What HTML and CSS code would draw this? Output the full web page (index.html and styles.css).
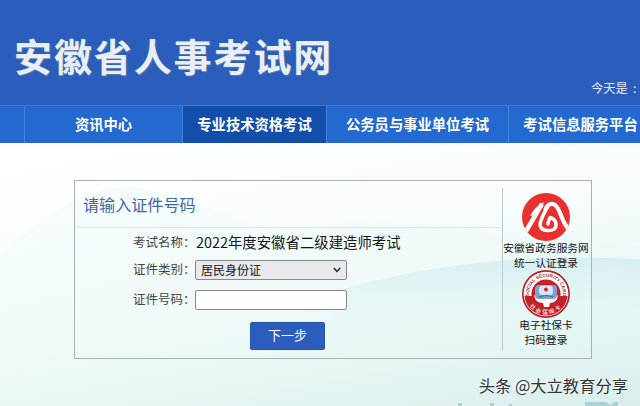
FILE: index.html
```html
<!DOCTYPE html>
<html lang="zh-CN">
<head>
  <meta charset="UTF-8" />
  <meta name="viewport" content="width=device-width, initial-scale=1.0" />
  <title>安徽省人事考试网</title>
  <link rel="stylesheet" href="styles.css">
</head>
<body>
  <header class="header">
    <h1 class="logo">安徽省人事考试网</h1>
    <span class="today">今天是<span class="colon">:</span></span>
  </header>

  <nav class="nav">
    <a class="nav-item" href="#">资讯中心</a>
    <a class="nav-item active" href="#">专业技术资格考试</a>
    <a class="nav-item" href="#">公务员与事业单位考试</a>
    <a class="nav-item" href="#">考试信息服务平台</a>
  </nav>

  <main class="main">
    <svg class="hills" viewBox="0 0 640 264" preserveAspectRatio="none">
      <defs>
        <linearGradient id="hill1" x1="0" y1="0" x2="0" y2="1">
          <stop offset="0" stop-color="#cdeaee" stop-opacity="0.7"/>
          <stop offset="0.5" stop-color="#dcf4f3" stop-opacity="0.25"/>
          <stop offset="1" stop-color="#dcf4f3" stop-opacity="0"/>
        </linearGradient>
        <linearGradient id="hill2" x1="0" y1="0" x2="0" y2="1">
          <stop offset="0" stop-color="#e6f7f8" stop-opacity="0.35"/>
          <stop offset="1" stop-color="#e6f7f8" stop-opacity="0"/>
        </linearGradient>
      </defs>
      <path d="M0 115Q60 50 130 42Q200 60 270 90Q370 70 500 92Q570 92 640 104V264H0Z" fill="url(#hill2)"/>
      <path d="M330 150Q440 118 560 115Q610 115 640 117V220H330Z" fill="url(#hill1)"/>
      <path d="M458 261h4v3h-4zM490 261h4v3h-4zM509 262h3v2h-3zM585 260h21l5 4h-26zM614 260h4v4h-8z" fill="#a9d3d2"/>
    </svg>

    <section class="panel">
      <form class="login-form">
        <h2 class="form-title">请输入证件号码</h2>
        <div class="form-row">
          <span class="label">考试名称：</span>
          <span class="exam-name">2022年度安徽省二级建造师考试</span>
        </div>
        <div class="form-row row-type">
          <label class="label" for="cardType">证件类别：</label>
          <div class="select" id="cardType">
            <span>居民身份证</span>
            <svg width="8" height="6" viewBox="0 0 8 6"><path d="M0.8 1L4 4.4L7.2 1" fill="none" stroke="#222" stroke-width="1.5"/></svg>
          </div>
        </div>
        <div class="form-row row-number">
          <label class="label" for="cardNo">证件号码：</label>
          <input type="text" id="cardNo" class="input" />
        </div>
        <button type="button" class="btn-next">下一步</button>
      </form>

      <aside class="other-login">
        <a class="login-way" href="#">
          <svg class="way-icon" viewBox="0 0 48 48">
            <defs>
              <clipPath id="disc"><circle cx="24" cy="24" r="24"/></clipPath>
            </defs>
            <circle cx="24" cy="24" r="24" fill="#e9302e"/>
            <g clip-path="url(#disc)">
              <path d="M1 43L13 23Q17 15 20 11" fill="none" stroke="#fff" stroke-width="4.6"/>
              <path d="M8 23Q13 13 22 9L20 15Q16 16 12 22Z" fill="#fff"/>
              <path d="M23 17Q26 10 31 11Q35 12 38 20Q41 29 48 39" fill="none" stroke="#fff" stroke-width="4"/>
              <path d="M26 13Q19 25 18 31Q18 37 25 37.500Q34 38 34 32Q34 26 28 24.500Q26 29 26 31" fill="none" stroke="#fff" stroke-width="3.500" stroke-linecap="round" stroke-linejoin="round"/>
            </g>
          </svg>
          <span>安徽省政务服务网</span>
          <span>统一认证登录</span>
        </a>
        <a class="login-way" href="#">
          <svg class="way-icon" viewBox="0 0 48 48">
            <defs>
              <path id="arcTop" d="M7.500 28A17 17 0 1 1 40.500 28"/>
              <path id="arcBottom" d="M3.500 26.500A20.700 20.700 0 0 0 44.500 26.500"/>
            </defs>
            <circle cx="24" cy="24" r="24" fill="#b9232a"/>
            <circle cx="24" cy="24" r="22.300" fill="#fff"/>
            <path d="M2.500 26H45.500A21.600 21.600 0 0 1 2.500 26Z" fill="#c3222a"/>
            <circle cx="24" cy="24" r="14.600" fill="#c3222a"/>
            <path d="M12 25Q13 33 21 33L22 37H27L28 33Q35 33 36 25L30 29H18Z" fill="#fff"/>
            <rect x="13" y="15" width="22" height="14" rx="4" fill="#7fa3d0"/>
            <rect x="17" y="15.500" width="14" height="10" rx="4" fill="#d5e5f5"/>
            <circle cx="24" cy="19.500" r="1.900" fill="#d5232b"/>
            <path d="M17 27Q24 24 31 27" stroke="#466eb1" stroke-width="1.500" fill="none"/>
            <text class="seal-en"><textPath href="#arcTop" startOffset="50%">SOCIAL SECURITY CARD</textPath></text>
            <text class="seal-cn"><textPath href="#arcBottom" startOffset="50%">社会保障卡</textPath></text>
          </svg>
          <span>电子社保卡</span>
          <span>扫码登录</span>
        </a>
      </aside>
    </section>

    <p class="credit">头条 @大立教育分享</p>
  </main>
</body>
</html>
```
FILE: styles.css
```css
* {
  box-sizing: border-box;
}

body {
  margin: 0;
  height: 406px;
  overflow: hidden;
  display: flex;
  flex-direction: column;
  font-family: "Noto Sans CJK SC", "Noto Sans", sans-serif;
  color: #222;
}

a {
  color: inherit;
  text-decoration: none;
}

.header {
  height: 105px;
  flex: none;
  display: flex;
  justify-content: space-between;
  background: #2b5dbd;
}

.logo {
  margin: 27px 0 0 14px;
  font-size: 38px;
  line-height: 56px;
  font-weight: bold;
  letter-spacing: 1.9px;
  white-space: nowrap;
  color: #e8effb;
  text-shadow: 1px 1px 1px #60799f;
}

.today {
  align-self: flex-end;
  width: 49px;
  margin-bottom: 7px;
  font-size: 12.3px;
  line-height: 20px;
  white-space: nowrap;
  color: #e3ebf5;
}

.colon {
  margin-left: 5px;
}

.nav {
  height: 38px;
  flex: none;
  display: grid;
  grid-template-columns: 158px 144px 182px 144px;
  padding-left: 24px;
  overflow: hidden;
  background: #2369cf;
  border-top: 1px solid #3b7bdb;
}

.nav-item {
  border-left: 1px solid #4382dd;
  color: #fff;
  font-size: 14.3px;
  font-weight: bold;
  line-height: 36px;
  text-align: center;
  white-space: nowrap;
}

.nav-item.active {
  background: #144eab;
}

.main {
  position: relative;
  flex: 1;
  display: flex;
  flex-direction: column;
  background: linear-gradient(170deg, #fff 0%, #fdfefe 20%, #f3fbfa 50%, #e5f6f5 78%, #d9eeec 100%);
}

.hills {
  position: absolute;
  inset: 0;
  width: 100%;
  height: 100%;
}

.panel {
  position: relative;
  display: flex;
  width: 518px;
  height: 179px;
  margin: 37px 0 0 74px;
  border: 1px solid #aab1b5;
}

.login-form {
  width: 427px;
}

.form-title {
  height: 47px;
  margin: 0 0 5px;
  padding-left: 8px;
  border-bottom: 1px solid #dce5e8;
  color: #4168a8;
  font-size: 16.1px;
  font-weight: normal;
  line-height: 47px;
}

.form-row {
  display: flex;
  align-items: center;
  height: 20px;
  padding-left: 58px;
}

.row-type {
  margin-top: 7px;
}

.row-number {
  margin-top: 10px;
}

.label {
  width: 62px;
  font-size: 12.5px;
  line-height: 18px;
  padding-bottom: 2px;
  white-space: nowrap;
  color: #444;
}

.exam-name {
  padding: 0 0 2px 1px;
  font-size: 14.4px;
  line-height: 18px;
  color: #151515;
}

.select,
.input {
  width: 152px;
  height: 20px;
  border: 1px solid #85898d;
  border-radius: 2px;
}

.select {
  display: flex;
  align-items: center;
  justify-content: space-between;
  padding: 0 5px;
  background: #e9e9ed;
  font-size: 12px;
  line-height: 18px;
  color: #111;
}

.input {
  padding: 0 4px;
  background: #fff;
}

.btn-next {
  display: block;
  width: 75px;
  height: 28px;
  margin: 12px 0 0 175px;
  padding: 0 0 2px;
  border: 1px solid #2456af;
  border-radius: 2px;
  background: #2b5dbf;
  color: #fff;
  font-family: inherit;
  font-size: 13px;
  line-height: 24px;
}

.other-login {
  flex: 1;
  margin: 7px 0 8px;
  padding: 5px 2px 0 0;
  border-left: 1px solid #bcc9cd;
}

.login-way {
  display: flex;
  flex-direction: column;
  align-items: center;
  height: 77px;
  font-size: 10.7px;
  line-height: 14.5px;
  white-space: nowrap;
  color: #111;
}

.way-icon {
  width: 48px;
  height: 48px;
  flex: none;
}

.seal-en,
.seal-cn {
  text-anchor: middle;
  font-weight: bold;
}

.seal-en {
  font-family: "Liberation Sans", sans-serif;
  font-size: 4.7px;
  fill: #a52b30;
}

.seal-cn {
  font-size: 5.5px;
  letter-spacing: 2px;
  fill: #f3cdbd;
}

.credit {
  position: relative;
  align-self: flex-end;
  margin: 14px 12px 0 0;
  font-size: 16.3px;
  line-height: 24px;
  white-space: nowrap;
  color: #333;
  text-shadow: -1px -1px 0 #fff;
}
```
